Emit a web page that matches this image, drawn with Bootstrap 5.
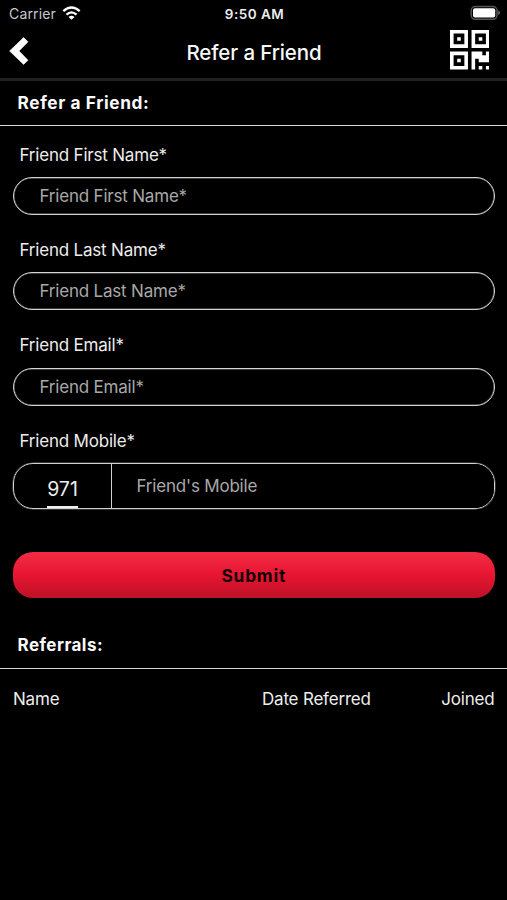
<!DOCTYPE html>
<html lang="en" data-bs-theme="dark">
<head>
<meta charset="utf-8">
<meta name="viewport" content="width=device-width, initial-scale=1">
<title>Refer a Friend</title>
<link href="https://cdn.jsdelivr.net/npm/bootstrap@5.3.0/dist/css/bootstrap.min.css" rel="stylesheet">
<style>
  body { background: #000; color: #ededed; font-family: Inter, "Liberation Sans", sans-serif; font-size: 17px; line-height: 20px; letter-spacing: -.2px; min-height: 900px; overflow-x: hidden; }
  .status { height: 27px; font-size: 14px; padding: 1px 6px 0 9px; }
  .status .col { line-height: 26px; }
  .carrier { color: #c8c8c8; letter-spacing: .15px; }
  .carrier svg { margin: 0 0 2px 6px; }
  .clock { font-size: 13.5px; font-weight: 600; letter-spacing: .5px; padding-right: 1px; }
  .battery { line-height: 22px !important; }
  .topbar { height: 54px; padding: 0 18px 3px 9px; border-bottom: 3px solid #212121; }
  .topbar h1 { font-size: 20.5px; font-weight: 500; letter-spacing: -.12px; line-height: 24px; color: #f8f8f8; padding: 3px 0 0 10px; }
  .side { width: 40px; line-height: 0; }
  .qr { padding-bottom: 2px; }
  .section-title { font-size: 17px; font-weight: 700; line-height: 44px; height: 45px; padding-left: 17.5px; letter-spacing: .45px; color: #fafafa; border-bottom: 1px solid #d8d8d8; }
  .title-wide { font-size: 17.3px; letter-spacing: .6px; }
  .refer-form { padding: 19px 12.5px 0 13px; }
  .form-label { display: block; margin: 0 0 12.3px 6.5px; line-height: 20px; color: #ededed; }
  .field-group { height: 95.2px; }
  .pill, .pill:focus { height: 38px; border: 1px solid #d4d4d4; box-shadow: inset 0 0 0 .5px #777; border-radius: 19px; background: #000; font-size: 17px; line-height: 20px; padding: 0 25.5px; }
  .form-control { letter-spacing: -.2px; }
  .form-control::placeholder { color: #a8a8a8; opacity: 1; }
  .phone { height: 46.5px; border: 1px solid #d0d0d0; box-shadow: 0 0 0 .5px #666; border-radius: 20px; overflow: hidden; }
  .code { width: 98px; border-right: 1px solid #d0d0d0; }
  .code span { font-size: 19.5px; line-height: 34px; letter-spacing: 0; border-bottom: 2px solid #eee; margin-top: 8px; height: 36px; }
  .phone .form-control { background: #000; border: 0; font-size: 17px; padding: 2px 24.5px 0; }
  .btn-refer, .btn-refer:hover { height: 46px; margin-top: 42.5px; padding: 2px 0 0; border: 0; border-radius: 20px; font-size: 17.3px; font-weight: 700; letter-spacing: .8px; color: #120003; background: linear-gradient(#f22c45, #e81531 50%, #bd1127); }
  .referrals { margin-top: 25px; height: 46px; }
  .list-head { padding: 20px 12.5px 0 13px; }
  .c-name { width: 249px; }
</style>
</head>
<body>
<div class="status row g-0 align-items-start">
  <div class="col d-flex align-items-center carrier">Carrier
    <svg width="19" height="14" viewBox="0 0 18 14" fill="none" stroke="#fff" stroke-width="2.3"><path d="M.8 5.2Q9-2.3 17.2 5.2M4 8.6Q9 4.2 14 8.6"/><path d="M9 13.8 6 10.9Q9 8.8 12 10.9Z" fill="#fff" stroke="none"/></svg>
  </div>
  <div class="col text-center clock">9:50 AM</div>
  <div class="col text-end battery">
    <svg width="31" height="16" viewBox="0 0 31 16"><rect x="1.2" y="1.5" width="25.8" height="12.8" rx="4" fill="#000" stroke="#555" stroke-width="1.5"/><rect x="3" y="3.3" width="22.2" height="9.2" rx="2" fill="#fff"/><path d="M28.2 5.4q4 2.4 0 4.8z" fill="#666"/></svg>
  </div>
</div>
<nav class="topbar d-flex align-items-center justify-content-between">
  <a class="side" href="#" aria-label="Back"><svg width="20" height="28" viewBox="0 0 20 28"><path d="M14.6 0.6 19 4.8 10 14 19 23.2 14.6 27.4.6 14Z" fill="#fff" stroke="#fff" stroke-width=".6" stroke-linejoin="round"/></svg></a>
  <h1 class="my-0">Refer a Friend</h1>
  <a class="side qr text-end" href="#" aria-label="QR code"><svg width="39.5" height="39.5" viewBox="0 0 11 11" fill="#fff" fill-rule="evenodd"><path d="M0 0h5v5H0zM1 1v3h3V1zM2 2h1v1H2zM6 0h5v5H6zM7 1v3h3V1zM8 2h1v1H8zM0 6h5v5H0zM1 7v3h3V7zM2 8h1v1H2zM6 6h3v1h1V6h1v3H8V8H7v3H6zM8 10h1v1H8zM10 10h1v1h-1z"/></svg></a>
</nav>
<h2 class="section-title title-wide m-0">Refer a Friend:</h2>
<form class="refer-form">
  <div class="field-group">
    <label class="form-label" for="first">Friend First Name*</label>
    <input class="form-control pill" id="first" placeholder="Friend First Name*">
  </div>
  <div class="field-group">
    <label class="form-label" for="last">Friend Last Name*</label>
    <input class="form-control pill" id="last" placeholder="Friend Last Name*">
  </div>
  <div class="field-group">
    <label class="form-label" for="email">Friend Email*</label>
    <input class="form-control pill" id="email" placeholder="Friend Email*">
  </div>
  <label class="form-label" for="mobile">Friend Mobile*</label>
  <div class="phone d-flex">
    <div class="code d-flex justify-content-center flex-shrink-0"><span>971</span></div>
    <input class="form-control" id="mobile" placeholder="Friend's Mobile">
  </div>
  <button type="button" class="btn btn-refer w-100">Submit</button>
</form>
<h2 class="section-title referrals mb-0">Referrals:</h2>
<div class="list-head d-flex">
  <div class="c-name">Name</div>
  <div class="flex-grow-1">Date Referred</div>
  <div>Joined</div>
</div>
<script src="https://cdn.jsdelivr.net/npm/bootstrap@5.3.0/dist/js/bootstrap.bundle.min.js"></script>
</body>
</html>
